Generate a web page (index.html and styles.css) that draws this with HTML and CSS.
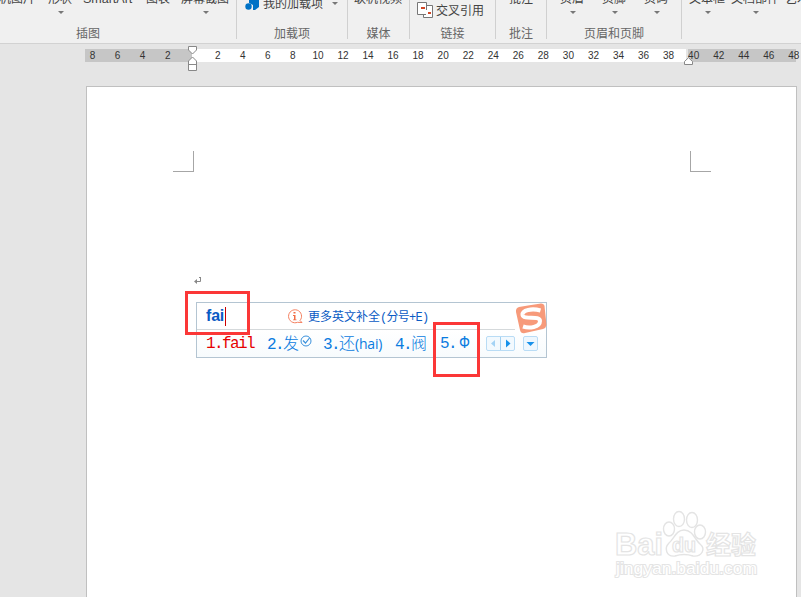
FILE: index.html
```html
<!DOCTYPE html>
<html lang="zh-CN">

<head>
  <meta charset="utf-8">
  <meta name="viewport" content="width=device-width,initial-scale=1.0">
  <title>Word</title>
  <link rel="stylesheet" href="styles.css">
</head>

<body>

  <div class="ribbon">
    <div class="group group-illustration">
      <div class="items">
        <div class="item">联机图片</div>
        <div class="item drop shape">形状</div>
        <div class="item smartart">SmartArt</div>
        <div class="item">图表</div>
        <div class="item drop">屏幕截图</div>
      </div>
      <div class="caption">插图</div>
    </div>
    <div class="group group-addin">
      <div class="items">
        <svg class="store" width="15" height="12" viewBox="0 0 15 12">
          <path d="M4 0H14V7L10 10H8V5L4 3Z" fill="#0072c6" />
          <circle cx="3.500" cy="6.500" r="3.200" fill="#0072c6" />
        </svg>
        <div class="item low">我的加载项</div>
        <i class="arrow"></i>
      </div>
      <div class="caption">加载项</div>
    </div>
    <div class="group group-media">
      <div class="items">
        <div class="item">联机视频</div>
      </div>
      <div class="caption">媒体</div>
    </div>
    <div class="group group-link">
      <div class="items">
        <svg class="crossref" width="16" height="16" viewBox="0 0 16 16">
          <path d="M6.5 3.5H15.5V15.5H6.5Z" fill="#fff" stroke="#777" />
          <path d="M.5 .5H9.5V12.5H.5Z" fill="#fff" stroke="#777" />
          <path d="M9 8H15V14H9Z" fill="#fff" />
          <path d="M4 5H8V7H4ZM11 10H14V12H11Z" fill="#d24726" />
        </svg>
        <div class="item lower">交叉引用</div>
      </div>
      <div class="caption">链接</div>
    </div>
    <div class="group group-comment">
      <div class="items">
        <div class="item">批注</div>
      </div>
      <div class="caption">批注</div>
    </div>
    <div class="group group-header">
      <div class="items">
        <div class="item drop">页眉</div>
        <div class="item drop">页脚</div>
        <div class="item drop">页码</div>
      </div>
      <div class="caption">页眉和页脚</div>
    </div>
    <div class="group group-text">
      <div class="items">
        <div class="item drop">文本框</div>
        <div class="item drop">文档部件</div>
        <div class="item">艺术字</div>
      </div>
    </div>
  </div>

  <div class="ruler">
    <div class="scale">
      <span>8</span><span>6</span><span>4</span><span>2</span><span></span>
      <span>2</span><span>4</span><span>6</span><span>8</span><span>10</span>
      <span>12</span><span>14</span><span>16</span><span>18</span><span>20</span>
      <span>22</span><span>24</span><span>26</span><span>28</span><span>30</span>
      <span>32</span><span>34</span><span>36</span><span>38</span><span>40</span>
      <span>42</span><span>44</span><span>46</span><span>48</span>
    </div>
    <svg class="indent-left" width="10" height="26" viewBox="0 0 10 26">
      <path d="M.5 .5H8.5V4L4.5 8L.5 4Z" fill="#fff" stroke="#888" />
      <path d="M4.5 11L8.5 15V24.5H.5V15Z" fill="#fff" stroke="#888" />
      <path d="M.5 18.5H8.5" stroke="#888" />
    </svg>
    <svg class="indent-right" width="10" height="9" viewBox="0 0 10 9">
      <path d="M4.5 .7L8.5 4.5V7.5H.5V4.5Z" fill="#fff" stroke="#888" />
    </svg>
  </div>

  <div class="page">
    <div class="corners">
      <i class="corner corner-left"></i>
      <i class="corner corner-right"></i>
    </div>
    <svg class="pilcrow" width="8" height="7" viewBox="0 0 8 7">
      <path d="M6.5 0V4.5H2M5 .5H6.5" fill="none" stroke="#888" />
      <path d="M0 4.5L3 2V7Z" fill="#888" />
    </svg>

    <div class="ime">
      <div class="ime-top">
        <span class="typed">fai</span>
        <i class="caret"></i>
        <svg class="info" width="16" height="15" viewBox="0 0 16 15">
          <path d="M13 11.500A6.500 6.500 0 1 0 10.500 13.300L15 13.500Z" fill="#fff" stroke="#f58060" />
          <path d="M6.500 3H8.500V4.600H6.500ZM6 6H8.500V10.500H9.500V11.300H6V10.500H7V7H6Z" fill="#f26c45" />
        </svg>
        <span class="more">更多英文补全<b>(分号+E)</b></span>
      </div>
      <div class="ime-list">
        <span class="cand first">1.fail</span>
        <span class="cand two">2.<em>发</em></span>
        <svg class="tick" width="12" height="12" viewBox="0 0 12 12">
          <circle cx="6" cy="6" r="5" fill="none" stroke="#3a91dc" />
          <path d="M3 5.5L5.5 8L9.5 3" fill="none" stroke="#3a91dc" stroke-width="1.2" />
        </svg>
        <span class="cand three">3.<em>还</em><small>(hai)</small></span>
        <span class="cand four">4.<em>阀</em></span>
        <span class="cand five">5.<em class="phi">Ф</em></span>
        <svg class="pager" width="29" height="15" viewBox="0 0 29 15">
          <rect x=".5" y=".5" width="28" height="14" rx="1.5" fill="#f2f9fe" stroke="#b9dcf5" />
          <path d="M14.5 1V14" stroke="#9fcff2" />
          <path d="M9 4V11L5 7.5Z" fill="#a4d3f5" />
          <path d="M20 3.5V11.5L24.5 7.5Z" fill="#1791ea" />
        </svg>
        <svg class="menu" width="15" height="15" viewBox="0 0 15 15">
          <rect x=".5" y=".5" width="14" height="14" rx="1.5" fill="#eef7fe" stroke="#b9dcf5" />
          <path d="M3.5 6H11.5L7.5 10Z" fill="#1791ea" />
        </svg>
      </div>
      <svg class="sogou" width="32" height="32" viewBox="0 0 32 32">
        <path d="M4 4Q14 2 26 .5Q29 .5 29.5 3L31.5 22Q31 25 28 26L10 30Q6 31 5 27L1 9Q.5 5 4 4Z" fill="#f79a7a" />
        <path d="M25.500 7.500C17 5 7 7 7.500 12C8.500 17.500 25 12 25 18C25 24.500 14 25.500 8 23.500" fill="none" stroke="#fff" stroke-width="4" />
      </svg>
    </div>
    <i class="mark mark-typed"></i>
    <i class="mark mark-phi"></i>

    <svg class="watermark" width="150" height="76" viewBox="0 0 150 76">
      <g fill="#fff" stroke="#e4e4e4" stroke-width="1.400">
        <ellipse cx="55" cy="29" rx="5.500" ry="7" />
        <ellipse cx="65" cy="19" rx="5.500" ry="7.500" />
        <ellipse cx="78" cy="20" rx="5.500" ry="7.500" />
        <ellipse cx="86" cy="32" rx="5.500" ry="7" />
        <path d="M70 30C79 30 81 40 86 44C92 49 88 57 79 56C73 54 67 54 61 56C52 57 50 48 55 43C60 39 62 30 70 30Z" />
        <text class="wm-bai" x="1" y="55" textLength="48" lengthAdjust="spacingAndGlyphs">Bai</text>
        <text class="wm-du" x="58" y="52" textLength="24" lengthAdjust="spacingAndGlyphs">du</text>
        <text class="wm-cn" x="92" y="54" textLength="50">经验</text>
        <text class="wm-url" x="2" y="74" textLength="141" lengthAdjust="spacingAndGlyphs">jingyan.baidu.com</text>
      </g>
    </svg>
  </div>

</body>

</html>
```

FILE: styles.css
```css
body {
  margin: 0;
  height: 597px;
  overflow: hidden;
  background: #e5e5e5;
  font-family: "Liberation Sans", "Noto Sans CJK SC", sans-serif;
  font-size: 12px;
  color: #444;
}

svg {
  display: block;
  flex: none;
}

/* ribbon */
.ribbon {
  display: flex;
  height: 43px;
  overflow: hidden;
  background: #f0f0f0;
  border-bottom: 1px solid #d2d2d2;
}

.group {
  box-sizing: border-box;
  flex: none;
  height: 39px;
  display: flex;
  flex-direction: column;
  border-right: 1px solid #d0d0d0;
}

.items {
  display: flex;
  flex: none;
  height: 25px;
  justify-content: center;
}

.item {
  flex: none;
  height: 18px;
  line-height: 18px;
  margin-top: -10px;
  white-space: nowrap;
}

.low {
  margin-top: -5px;
}

.lower {
  margin-top: 2px;
}

.drop::after,
.arrow {
  content: "";
  display: block;
  width: 0;
  margin: 3px auto 0;
  border: 3px solid transparent;
  border-top-color: #777;
  border-bottom: none;
}

.drop::after {
  position: relative;
  left: 1px;
}

.caption {
  flex: none;
  height: 18px;
  line-height: 18px;
  text-align: center;
  color: #666;
}

.group-illustration {
  width: 297px;
  margin-left: -60px;
}

.group-illustration .items {
  justify-content: flex-end;
  gap: 11px;
  padding-right: 7px;
}

.smartart {
  width: 52px;
  font-size: 12.5px;
}

.shape {
  margin-left: 2px;
}

.group-addin {
  width: 111px;
}

.group-addin .items {
  justify-content: flex-start;
  padding-left: 8px;
}

.group-addin .low {
  margin-left: 3px;
}

.group-addin .arrow {
  margin: 2px 0 0 9px;
}

.group-media {
  width: 62px;
}

.group-media .items {
  justify-content: flex-start;
  padding-left: 6px;
}

.group-link {
  width: 86px;
}

.group-link .items {
  justify-content: flex-start;
  padding-left: 7px;
}

.crossref {
  margin: 2px 3px 0 0;
}

.group-comment {
  width: 51px;
}

.group-header {
  width: 135px;
}

.group-header .items {
  gap: 18px;
}

.group-text {
  width: 150px;
  border: none;
}

.group-text .items {
  justify-content: flex-start;
  padding-left: 7px;
  gap: 6px;
}

/* ruler */
.ruler {
  position: relative;
  margin: 5px 0 0 85px;
  width: 711px;
  height: 13px;
  background: linear-gradient(to right, #c6c6c6 107px, #fff 107px, #fff 601px, #e5e5e5 601px, #e5e5e5 603px, #c6c6c6 603px);
}

.scale {
  display: grid;
  grid-template-columns: repeat(29, 25.06px);
  margin-left: -5px;
  line-height: 14px;
  font-size: 10px;
  text-align: center;
  color: #333;
}

.indent-left {
  position: absolute;
  left: 103px;
  top: -3px;
}

.indent-right {
  position: absolute;
  left: 599px;
  top: 8px;
}

/* document */
.page {
  position: relative;
  box-sizing: border-box;
  width: 711px;
  height: 520px;
  margin: 24px 0 0 86px;
  background: #fff;
  border: 1px solid #c0c0c0;
}

.corners {
  display: flex;
  justify-content: space-between;
  margin: 64px 85px 0 86px;
}

.corner {
  width: 20px;
  height: 20px;
  border-bottom: 1px solid #a6a6a6;
}

.corner-left {
  border-right: 1px solid #a6a6a6;
}

.corner-right {
  border-left: 1px solid #a6a6a6;
}

.pilcrow {
  margin: 105px 0 0 107px;
}

/* input method window */
.ime {
  position: absolute;
  left: 109px;
  top: 215px;
  box-sizing: border-box;
  width: 351px;
  height: 56px;
  border: 1px solid #b4c5d2;
  background: linear-gradient(#fff 27px, #f7fbfd);
}

.ime-top {
  display: flex;
  align-items: center;
  height: 26px;
  width: 318px;
  border-bottom: 1px solid #d5d9db;
}

.typed {
  width: 19px;
  margin-left: 9px;
  font-size: 16px;
  font-weight: bold;
  letter-spacing: -0.2px;
  color: #0a5bc4;
}

.caret {
  width: 1px;
  height: 19px;
  background: #c00;
}

.info {
  margin-left: 61px;
}

.more {
  margin-left: 5px;
  white-space: nowrap;
  color: #0a5bc4;
}

.more b {
  font-family: "Liberation Mono", "Noto Sans CJK SC", monospace;
  font-weight: normal;
  letter-spacing: -0.7px;
}

.ime-list {
  display: flex;
  align-items: center;
  height: 27px;
}

.cand {
  flex: none;
  font-family: "Liberation Mono", "Noto Sans CJK SC", monospace;
  font-size: 16px;
  line-height: 20px;
  letter-spacing: -1.6px;
  white-space: nowrap;
  color: #0a7be0;
}

.cand em {
  font-style: normal;
  font-family: "Noto Sans CJK SC", sans-serif;
  font-weight: 300;
  letter-spacing: 0;
}

.cand small {
  font-family: "Open Sans", sans-serif;
  font-size: 14px;
  letter-spacing: -0.2px;
}

.first {
  width: 61px;
  margin-left: 9px;
  color: #e60000;
}

.two {
  width: 33px;
}

.tick {
  margin-top: -6px;
}

.three {
  width: 72px;
  margin-left: 11px;
}

.four {
  width: 45px;
}

.five {
  width: 46px;
}

.cand .phi {
  font-family: "Liberation Sans", sans-serif;
  display: inline-block;
  font-size: 17px;
  margin-left: 2px;
  transform: scaleX(0.85);
}

.menu {
  margin-left: 8px;
}

.sogou {
  position: absolute;
  right: -1px;
  top: 0;
}

/* red highlight frames */
.mark {
  position: absolute;
  box-sizing: border-box;
  border: 3px solid #fb3737;
}

.mark-typed {
  left: 98px;
  top: 204px;
  width: 65px;
  height: 44px;
}

.mark-phi {
  left: 346px;
  top: 235px;
  width: 47px;
  height: 55px;
}

.watermark {
  position: absolute;
  left: 527px;
  top: 413px;
  overflow: visible;
}

.watermark text {
  font-family: "Liberation Sans", "Noto Sans CJK SC", sans-serif;
  stroke-width: 1.2px;
}

.wm-bai {
  font-size: 32px;
  font-weight: bold;
}

.wm-du {
  font-size: 21px;
  font-weight: bold;
}

.wm-cn {
  font-size: 25px;
  font-weight: bold;
}

.watermark .wm-url {
  font-size: 17px;
  paint-order: stroke;
  stroke-width: 2px;
}
```
